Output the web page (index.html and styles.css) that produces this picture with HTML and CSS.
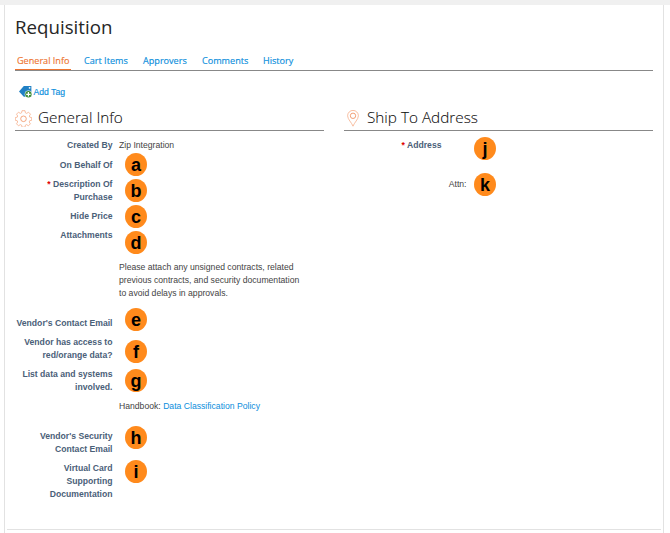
FILE: index.html
```html
<!DOCTYPE html>
<html lang="en">
<head>
<meta charset="utf-8">
<title>Requisition</title>
<link rel="stylesheet" href="styles.css">
</head>
<body>
<main class="panel">
  <h1><span>Requisition</span></h1>
  <nav class="tabs">
    <a class="tab general active">General Info</a><a class="tab cart">Cart Items</a><a class="tab approvers">Approvers</a><a class="tab comments">Comments</a><a class="tab history">History</a>
  </nav>
  <a class="add-tag">
    <svg width="14" height="12" viewBox="0 0 14 12">
      <path d="M0 5.5 4.8 0H12.4V10.8H4.8Z" fill="#2080c4"/>
      <circle cx="10.6" cy="1.8" r=".9" fill="#fff"/>
      <circle cx="9.4" cy="8.3" r="3.7" fill="#fff"/>
      <circle cx="9.4" cy="8.3" r="3.2" fill="#3c8c37"/>
      <path d="M7.2 8.3h4.4M9.4 6.1v4.4" stroke="#fff" stroke-width="1.2"/>
    </svg><span>Add Tag</span>
  </a>
  <div class="columns">
    <section>
      <h2>
        <svg class="gear" width="17" height="17" viewBox="0 0 17 17" fill="none" stroke="#f6ae8a" stroke-width=".8">
          <path d="M7 .7h3l.4 2.1 1.3.6 1.8-1.2 2 2-1.2 1.8.5 1.2 1.9.3v2.8l-2 .4-.5 1.3 1.2 1.8-2 2-1.8-1.2-1.2.6-.4 2H7l-.4-2-1.3-.6-1.8 1.2-2-2 1.2-1.8-.5-1.3-1.9-.4V7.5l1.9-.3.5-1.2-1.2-1.8 2-2 1.8 1.2 1.3-.6Z"/>
          <circle cx="8.5" cy="8.8" r="2.8" stroke="#f19160"/>
        </svg><span class="title-general">General Info</span>
      </h2>
      <div class="fields">
        <div class="row single"><div class="label created">Created By</div><div class="value">Zip Integration</div></div>
        <div class="row behalf"><div class="label">On Behalf Of</div><b class="badge">a</b></div>
        <div class="row double description"><div class="label"><i>*</i> Description Of<br>Purchase</div><b class="badge">b</b></div>
        <div class="row single price"><div class="label">Hide Price</div><b class="badge">c</b></div>
        <div class="row attachments"><div class="label">Attachments</div><div class="value"><b class="badge">d</b><p>Please attach any unsigned contracts, related<br>previous contracts, and security documentation<br>to avoid delays in approvals.</p></div></div>
        <div class="row single vendor"><div class="label">Vendor's Contact Email</div><b class="badge">e</b></div>
        <div class="row double access"><div class="label">Vendor has access to<br>red/orange data?</div><b class="badge">f</b></div>
        <div class="row systems"><div class="label">List data and systems<br>involved.</div><div class="value"><b class="badge">g</b><p>Handbook: <a>Data Classification Policy</a></p></div></div>
        <div class="row double security"><div class="label">Vendor's Security<br>Contact Email</div><b class="badge">h</b></div>
        <div class="row virtual"><div class="label">Virtual Card<br>Supporting<br>Documentation</div><b class="badge">i</b></div>
      </div>
    </section>
    <section>
      <h2>
        <svg class="pin" width="12" height="17" viewBox="0 0 12 17" fill="none" stroke="#f6ae8a" stroke-width=".8">
          <path d="M6 16.2C4.8 12.8.6 9.2.6 5.8a5.4 5.4 0 0 1 10.8 0C11.4 9.2 7.2 12.8 6 16.2Z"/>
          <circle cx="6" cy="5.8" r="2.7" stroke="#f08a58"/>
        </svg><span class="title-ship">Ship To Address</span>
      </h2>
      <div class="ship-row address"><div class="label"><i>*</i> Address</div><b class="badge">j</b></div>
      <div class="ship-row attn"><div>Attn:</div><b class="badge">k</b></div>
    </section>
  </div>
</main>
</body>
</html>
```
FILE: styles.css
```css
* { box-sizing: border-box; }
body {
  margin: 0;
  height: 533px;
  overflow: hidden;
  padding: 5px 6px 0 4px;
  background: linear-gradient(#f0f0f0 5px, #fff 5px);
  font: 8.65px/13px "Liberation Sans", sans-serif;
  color: #444;
}
.panel {
  height: 528px;
  padding: 8px 10px 0;
  border: solid #e2e2e2;
  border-width: 0 1px;
  background: linear-gradient(#e2e2e2, #e2e2e2) 2px 524px / 654px 1px no-repeat;
}
h1, h2, p { margin: 0; }
h1 {
  height: 40px;
  font: 400 18.7px/28px "Open Sans", sans-serif;
  color: #262626;
}
.tabs {
  display: flex;
  height: 18px;
  border-bottom: 1px solid #888;
  font: 9.1px/16px "Open Sans", sans-serif;
}
.tab { color: #0a8edc; white-space: nowrap; height: 17px; -webkit-text-stroke: .15px; }
.general { width: 56px; padding-left: 2px; }
.active { color: #ee7430; border-bottom: 1px solid #ee7430; }
.cart { margin-left: 13px; width: 59px; }
.approvers { width: 59px; }
.comments { width: 61px; }
.add-tag {
  display: flex;
  height: 32px;
  padding: 15px 0 0 4px;
  color: #0a8edc;
  font: 8.65px/13px "Liberation Sans", sans-serif;
  -webkit-text-stroke: .15px;
}
.add-tag span { margin-left: .5px; }
.columns {
  display: grid;
  grid-template-columns: 309px 309px;
  column-gap: 20px;
}
h2 {
  display: flex;
  height: 28px;
  border-bottom: 1px solid #888;
  font: 300 15.3px/22px "Open Sans", sans-serif;
  color: #111;
  padding-top: 3px;
  -webkit-text-stroke: .1px;
}
.gear { margin: 4px 6px 0 0; }
.pin { margin: 4px 7px 0 3px; }
.title-ship { margin-left: 1px; }
.fields { padding-top: 8px; }
.row { display: flex; }
.label {
  width: 98px;
  flex: none;
  margin-right: 6px;
  padding-right: .5px;
  text-align: right;
  font-weight: bold;
  white-space: nowrap;
  color: #4a6078;
}
.label i { color: #e00000; font-style: normal; }
.single { height: 19px; }
.behalf { height: 20px; padding-top: 1px; }
.double { height: 32px; }
.attachments { height: 88px; }
.systems { height: 62px; }
.badge {
  display: block;
  flex: none;
  width: 22px;
  height: 23px;
  margin-left: 6px;
  border-radius: 50%;
  background: #ff8a1c;
  color: #000;
  font: bold 18px/24px "Liberation Sans", sans-serif;
  text-align: center;
}
.behalf .badge { margin-top: -6px; }
.price .badge { margin-top: -5px; }
.attachments .badge { margin-top: 2px; }
.attachments p { margin-top: 7px; }
.vendor .badge { margin-top: -9px; }
.access .badge { margin-top: 4px; }
.systems .badge { margin-top: 1px; }
.systems p { margin-top: 8px; }
.security .badge { margin-top: -4px; }
.virtual .badge { margin-top: -2px; }
.description .badge { margin-top: 1px; }
a { color: #0a8edc; }
.ship-row { display: flex; }
.address { height: 47px; padding-top: 8px; }
.address .badge { margin: -2px 0 0 26px; }
.attn > div { width: 122.5px; text-align: right; }
.attn .badge { margin: -5px 0 0 7.5px; }
```
